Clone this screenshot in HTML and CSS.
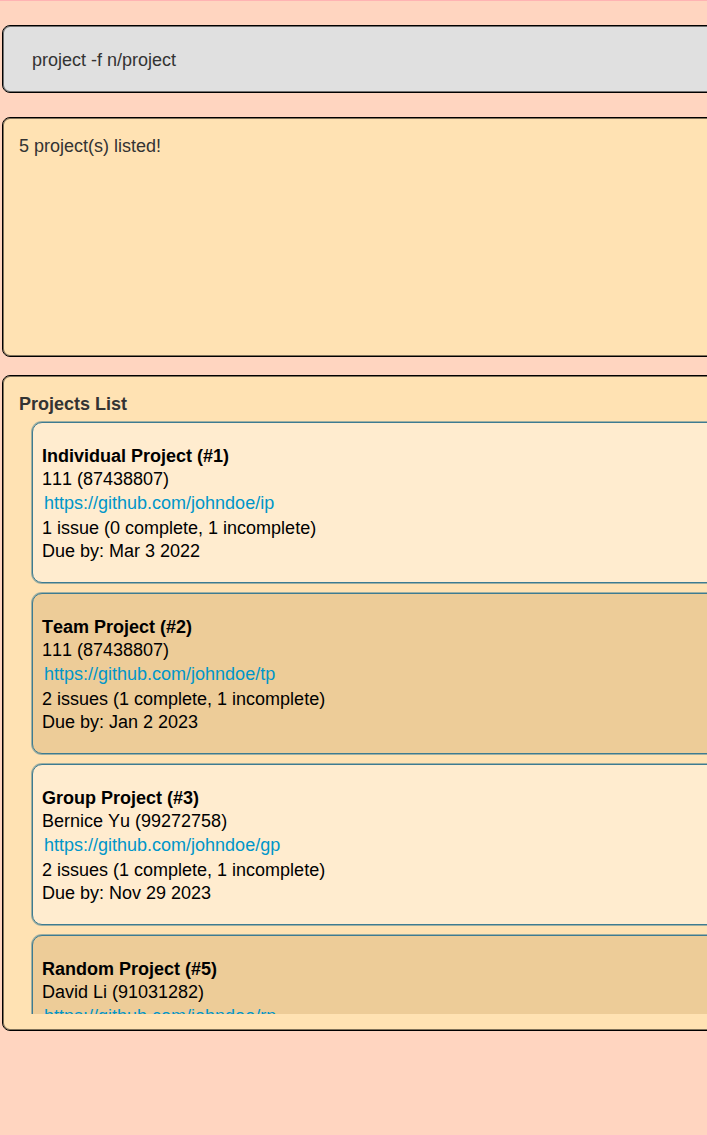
FILE: index.html
```html
<!DOCTYPE html>
<html lang="en">
<head>
<meta charset="utf-8">
<title>Projects</title>
<link rel="stylesheet" href="styles.css">
</head>
<body>
<main class="app">
  <form class="panel command">
    <input class="command-input" type="text" aria-label="Command" value="project -f n/project">
  </form>
  <section class="panel result" role="status">5 project(s) listed!</section>
  <section class="panel projects">
    <h1 class="projects-title">Projects List</h1>
    <ul class="project-list">
      <li class="card">
        <h2 class="name">Individual Project (#1)</h2>
        <p class="line">111 (87438807)</p>
        <a class="link" href="https://github.com/johndoe/ip">https://github.com/johndoe/ip</a>
        <p class="line">1 issue (0 complete, 1 incomplete)</p>
        <p class="line">Due by: Mar 3 2022</p>
      </li>
      <li class="card">
        <h2 class="name">Team Project (#2)</h2>
        <p class="line">111 (87438807)</p>
        <a class="link" href="https://github.com/johndoe/tp">https://github.com/johndoe/tp</a>
        <p class="line">2 issues (1 complete, 1 incomplete)</p>
        <p class="line">Due by: Jan 2 2023</p>
      </li>
      <li class="card">
        <h2 class="name">Group Project (#3)</h2>
        <p class="line">Bernice Yu (99272758)</p>
        <a class="link" href="https://github.com/johndoe/gp">https://github.com/johndoe/gp</a>
        <p class="line">2 issues (1 complete, 1 incomplete)</p>
        <p class="line">Due by: Nov 29 2023</p>
      </li>
      <li class="card">
        <h2 class="name">Random Project (#5)</h2>
        <p class="line">David Li (91031282)</p>
        <a class="link" href="https://github.com/johndoe/rp">https://github.com/johndoe/rp</a>
      </li>
    </ul>
  </section>
</main>
</body>
</html>
```
FILE: styles.css
```css
* {
  box-sizing: border-box;
}

body {
  margin: 0;
  background: #ffd5c0;
  font: 18px/23px "Liberation Sans", Arial, sans-serif;
  font-kerning: none;
  color: #333;
  overflow: hidden;
}

h1, h2, p, ul {
  margin: 0;
  padding: 0;
  font-size: inherit;
}

.app {
  display: flex;
  flex-direction: column;
  height: 100vh;
  padding: 24px 0 104px 2px;
  border-top: 1px solid #ffb3b3;
}

/* Panels run on past the right edge of the window. */
.panel {
  margin-right: -16px;
  border: 1px solid #000;
  border-radius: 8px;
  background: #ffe2b3;
  box-shadow: inset 0 0 0 1px rgba(0, 0, 0, 0.5);
}

.command {
  display: flex;
  flex: none;
  margin-bottom: 24px;
  background: #e0e0e0;
}

.command-input {
  flex: 1;
  min-width: 0;
  height: 66px;
  padding: 2px 29px 0;
  border: 0;
  outline: 0;
  background: transparent;
  font: inherit;
  font-kerning: none;
  color: inherit;
}

.result {
  flex: none;
  min-height: 240px;
  margin-bottom: 18px;
  padding: 17px 16px;
}

.projects {
  display: flex;
  flex: 1;
  flex-direction: column;
  min-height: 0;
  padding: 17px 0 16px 16px;
}

.projects-title {
  margin-bottom: 5px;
}

.project-list {
  display: flex;
  flex: 1;
  flex-direction: column;
  gap: 10px;
  min-height: 0;
  padding: 1px 0 0 13px;
  overflow: hidden;
  list-style: none;
}

.card {
  flex: none;
  padding: 22px 9px 19px;
  border: 1px solid #3e7b91;
  border-radius: 10px;
  background: #ffeccf;
  box-shadow: 0 0 0 1px rgba(62, 123, 145, 0.5);
  color: #000;
}

.card:nth-child(even) {
  background: #edcc98;
}

.link {
  display: block;
  width: fit-content;
  padding: 1px 2px 2px;
  color: #0096c9;
  text-decoration: none;
}
```
